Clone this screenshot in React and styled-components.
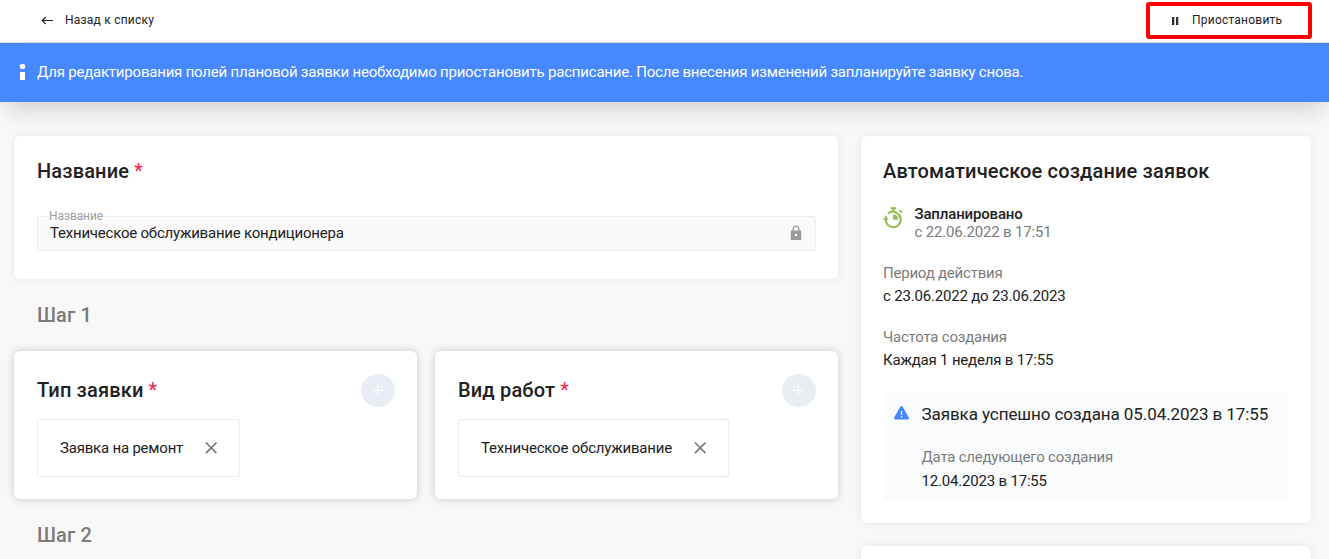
import React from "react";
import styled, { createGlobalStyle } from "styled-components";

const GlobalStyle = createGlobalStyle`
  *, *::before, *::after { box-sizing: border-box; }
  body {
    margin: 0;
    background: #f8f8f8;
    font-family: Roboto, "Liberation Sans", sans-serif;
    color: #212121;
  }
  button { font: inherit; color: inherit; border: 0; background: none; padding: 0; }
`;

const Page = styled.div`
  height: 559px;
  overflow: hidden;
  display: flex;
  flex-direction: column;
`;

const Toolbar = styled.header`
  flex: none;
  height: 43px;
  padding: 2px 17px 3px 41px;
  display: flex;
  align-items: center;
  justify-content: space-between;
  background: #fff;
  border-bottom: 1px solid #dedede;
`;

const ToolbarButton = styled.button`
  display: flex;
  align-items: center;
  gap: ${(p) => p.$gap || 11}px;
  height: 36px;
  padding-bottom: 2px;
  font-size: 12px;
  line-height: 16px;
  letter-spacing: 0.22px;
  font-weight: 400;
`;

const Highlight = styled.div`
  width: 166px;
  height: 37px;
  padding-left: 21px;
  display: flex;
  align-items: center;
  border: 4px solid #fe0000;
  border-radius: 3px;
`;

const Banner = styled.div`
  flex: none;
  height: 59px;
  padding: 0 19px 1px;
  display: flex;
  align-items: center;
  gap: 11px;
  background: #4688ff;
  color: #fff;
  font-size: 15px;
  line-height: 20px;
  letter-spacing: -0.206px;
  box-shadow: 0 14px 22px -6px rgba(0, 0, 0, 0.16);
`;

const Content = styled.main`
  flex: 1;
  min-height: 0;
  padding: 34px 18px 0 14px;
  display: grid;
  grid-template-columns: 824px 450px;
  column-gap: 23px;
  align-items: start;
`;

const Column = styled.div`
  display: flex;
  flex-direction: column;
`;

const Card = styled.section`
  height: ${(p) => p.$height}px;
  padding: 23px;
  background: #fff;
  border-radius: 6px;
  box-shadow: ${(p) =>
    p.$raised ? "0 0 8px rgba(0, 0, 0, 0.2)" : "0 0 8px rgba(0, 0, 0, 0.08)"};
`;

const NameCard = styled(Card)`
  padding-right: 22px;
`;

const SideCard = styled(Card)`
  padding: 23px 23px 0 22px;
  margin-bottom: 23px;
`;

const CardHeader = styled.div`
  display: flex;
  justify-content: space-between;
  align-items: center;
  height: 33px;
`;

const Title = styled.h2`
  margin: 0;
  font-size: 20px;
  line-height: 24px;
  font-weight: 500;
  letter-spacing: 0.15px;
`;

const CardTitle = styled(Title)`
  padding-bottom: 2px;
`;

const Required = styled.span`
  color: #f5224b;
  font-weight: 400;
`;

const Field = styled.div`
  position: relative;
  height: 35px;
  margin-top: 33px;
  padding: 0 13px 0 12px;
  display: flex;
  align-items: center;
  justify-content: space-between;
  background: #fafafa;
  border: 1px solid #ededed;
  border-radius: 3px;
`;

const FieldValue = styled.span`
  padding-bottom: 2px;
  font-size: 15px;
  line-height: 20px;
  letter-spacing: -0.215px;
`;

const FieldLabel = styled.label`
  position: absolute;
  top: -9px;
  left: 11px;
  font-size: 12px;
  line-height: 16px;
  letter-spacing: -0.1px;
  color: #9e9e9e;
  background: linear-gradient(#fff 9px, #fafafa 9px);
`;

const Step = styled.h2`
  margin: 0;
  height: 72px;
  padding-left: 23px;
  font-size: 20px;
  line-height: 72px;
  font-weight: 500;
  letter-spacing: 0.1px;
  color: #7b7b7b;
`;

const CardRow = styled.div`
  display: grid;
  grid-template-columns: 403px 403px;
  gap: 18px;
`;

const AddButton = styled.button`
  display: flex;
  align-items: center;
  justify-content: center;
  width: 34px;
  height: 33px;
  margin-right: -1px;
  border-radius: 50%;
  background: #e9eef5;
`;

const Chip = styled.div`
  width: ${(p) => p.$width}px;
  height: 58px;
  margin-top: 12px;
  padding: 0 22px;
  display: flex;
  align-items: center;
  justify-content: space-between;
  border: 1px solid #ebebeb;
  border-radius: 3px;
  font-size: 15px;
  line-height: 20px;
  letter-spacing: -0.2px;
`;

const Status = styled.div`
  display: flex;
  gap: 11.5px;
  margin-top: 22px;
  font-size: 15px;
  line-height: 18px;
  letter-spacing: -0.16px;
`;

const StatusIcon = styled.div`
  padding-top: 2px;
`;

const StatusName = styled.div`
  font-weight: 500;
`;

const Muted = styled.div`
  color: #7b7b7b;
`;

const Fact = styled.div`
  margin-top: ${(p) => p.$top}px;
  font-size: 15px;
  line-height: ${(p) => p.$line || 23}px;
  letter-spacing: -0.19px;

  ${Muted} {
    letter-spacing: -0.22px;
  }
`;

const Notice = styled.div`
  display: flex;
  gap: 11.5px;
  height: 109px;
  margin-top: 20px;
  padding: 11px 11px 0 10px;
  background: #fafbfd;
  border-radius: 6px;
`;

const NoticeIcon = styled.div`
  padding-top: 1px;
`;

const NoticeTitle = styled.div`
  font-size: 17px;
  line-height: 22px;
  letter-spacing: -0.08px;
`;

const Icon = styled.svg`
  display: block;
  flex: none;
`;

function BackIcon() {
  return (
    <Icon width="13" height="12" viewBox="0 0 13 12" fill="none" stroke="#212121" strokeWidth="1.15">
      <path d="M12 6.500H1.400M4.700 3 1.200 6.500l3.500 3.500" />
    </Icon>
  );
}

function PauseIcon() {
  return (
    <Icon width="9" height="10" viewBox="0 0 9 10" fill="#303030">
      <path d="M1 2h2.300v8H1zM5 2h2.300v8H5z" />
    </Icon>
  );
}

function InfoIcon() {
  return (
    <Icon width="7" height="18" viewBox="0 0 7 18" fill="#fff">
      <circle cx="3.5" cy="3.4" r="2.7" />
      <path d="M1 9h5v8H1z" />
    </Icon>
  );
}

function LockIcon() {
  return (
    <Icon width="12" height="17" viewBox="0 0 12 17">
      <path d="M3.2 6V4a2.8 2.8 0 0 1 5.6 0v2" fill="none" stroke="#999" strokeWidth="1.3" />
      <path fill="#999" fillRule="evenodd" d="M1.8 5.5h8.4c.5 0 1 .4 1 1v7.4c0 .6-.5 1-1 1H1.8c-.6 0-1-.4-1-1V6.500c0-.6.400-1 1-1ZM6 8.700a1.300 1.300 0 1 0 0 2.600 1.300 1.300 0 0 0 0-2.600Z" />
    </Icon>
  );
}

function PlusIcon() {
  return (
    <Icon width="12" height="12" viewBox="0 0 12 12" stroke="#fff" strokeWidth="1">
      <path d="M5.500 0v11M0 5.500h11" />
    </Icon>
  );
}

function CloseIcon() {
  return (
    <Icon width="12" height="12" viewBox="0 0 12 12" stroke="#7b7b7b" strokeWidth="1.700">
      <path d="m.9.5 10.600 10.600M11.500.5.9 11.100" />
    </Icon>
  );
}

function StopwatchIcon() {
  return (
    <Icon width="20" height="22" viewBox="0 0 20 22" fill="none" stroke="#9cbd5b">
      <path d="M2.800 11.500a7.500 7.500 0 1 0 14.900.8 7.500 7.500 0 0 0-3.300-6" strokeWidth="2.200" />
      <path d="M4.900 6.500C7.200 4.500 10.900 4 14.400 6.300" strokeWidth="2" />
      <path d="M10.300 1.500v3" strokeWidth="2.600" />
      <path d="M7.500 1.100h5.600" strokeWidth="2" />
      <path d="m16.400 3.300 2.600 2.300" strokeWidth="2" />
      <path d="M10 7.200a5.200 5.200 0 0 1 5.300 5.600H10z" fill="#9cbd5b" stroke="none" />
      <path d="M2.800 8 0 13h5.600z" fill="#9cbd5b" stroke="none" />
    </Icon>
  );
}

function AlertIcon() {
  return (
    <Icon width="17" height="17" viewBox="0 0 17 17">
      <path d="M8.500 3.200 2.200 14.200h12.600z" fill="#4688ff" stroke="#4688ff" strokeWidth="2.400" strokeLinejoin="round" />
      <path d="M8.500 7v4M8.500 12v1.500" stroke="#fff" strokeWidth="1.300" />
    </Icon>
  );
}

function SelectCard({ title, value, width }) {
  return (
    <Card $height={148} $raised>
      <CardHeader>
        <CardTitle>
          {title} <Required>*</Required>
        </CardTitle>
        <AddButton aria-label="Добавить">
          <PlusIcon />
        </AddButton>
      </CardHeader>
      <Chip $width={width}>
        <span>{value}</span>
        <CloseIcon />
      </Chip>
    </Card>
  );
}

export default function App() {
  return (
    <Page>
      <GlobalStyle />
      <Toolbar>
        <ToolbarButton>
          <BackIcon />
          Назад к списку
        </ToolbarButton>
        <Highlight>
          <ToolbarButton $gap={12}>
            <PauseIcon />
            Приостановить
          </ToolbarButton>
        </Highlight>
      </Toolbar>
      <Banner>
        <InfoIcon />
        <span>
          Для редактирования полей плановой заявки необходимо приостановить расписание. После внесения
          изменений запланируйте заявку снова.
        </span>
      </Banner>
      <Content>
        <Column>
          <NameCard $height={143}>
            <Title>
              Название <Required>*</Required>
            </Title>
            <Field>
              <FieldLabel>Название</FieldLabel>
              <FieldValue>Техническое обслуживание кондиционера</FieldValue>
              <LockIcon />
            </Field>
          </NameCard>
          <Step>Шаг 1</Step>
          <CardRow>
            <SelectCard title="Тип заявки" value="Заявка на ремонт" width={203} />
            <SelectCard title="Вид работ" value="Техническое обслуживание" width={271} />
          </CardRow>
          <Step>Шаг 2</Step>
        </Column>
        <Column>
          <SideCard $height={387}>
            <Title>Автоматическое создание заявок</Title>
            <Status>
              <StatusIcon>
                <StopwatchIcon />
              </StatusIcon>
              <div>
                <StatusName>Запланировано</StatusName>
                <Muted>с 22.06.2022 в 17:51</Muted>
              </div>
            </Status>
            <Fact $top={21}>
              <Muted>Период действия</Muted>
              <div>с 23.06.2022 до 23.06.2023</div>
            </Fact>
            <Fact $top={18}>
              <Muted>Частота создания</Muted>
              <div>Каждая 1 неделя в 17:55</div>
            </Fact>
            <Notice>
              <NoticeIcon>
                <AlertIcon />
              </NoticeIcon>
              <div>
                <NoticeTitle>Заявка успешно создана 05.04.2023 в 17:55</NoticeTitle>
                <Fact $top={20} $line={24}>
                  <Muted>Дата следующего создания</Muted>
                  <div>12.04.2023 в 17:55</div>
                </Fact>
              </div>
            </Notice>
          </SideCard>
          <SideCard $height={120} />
        </Column>
      </Content>
    </Page>
  );
}
